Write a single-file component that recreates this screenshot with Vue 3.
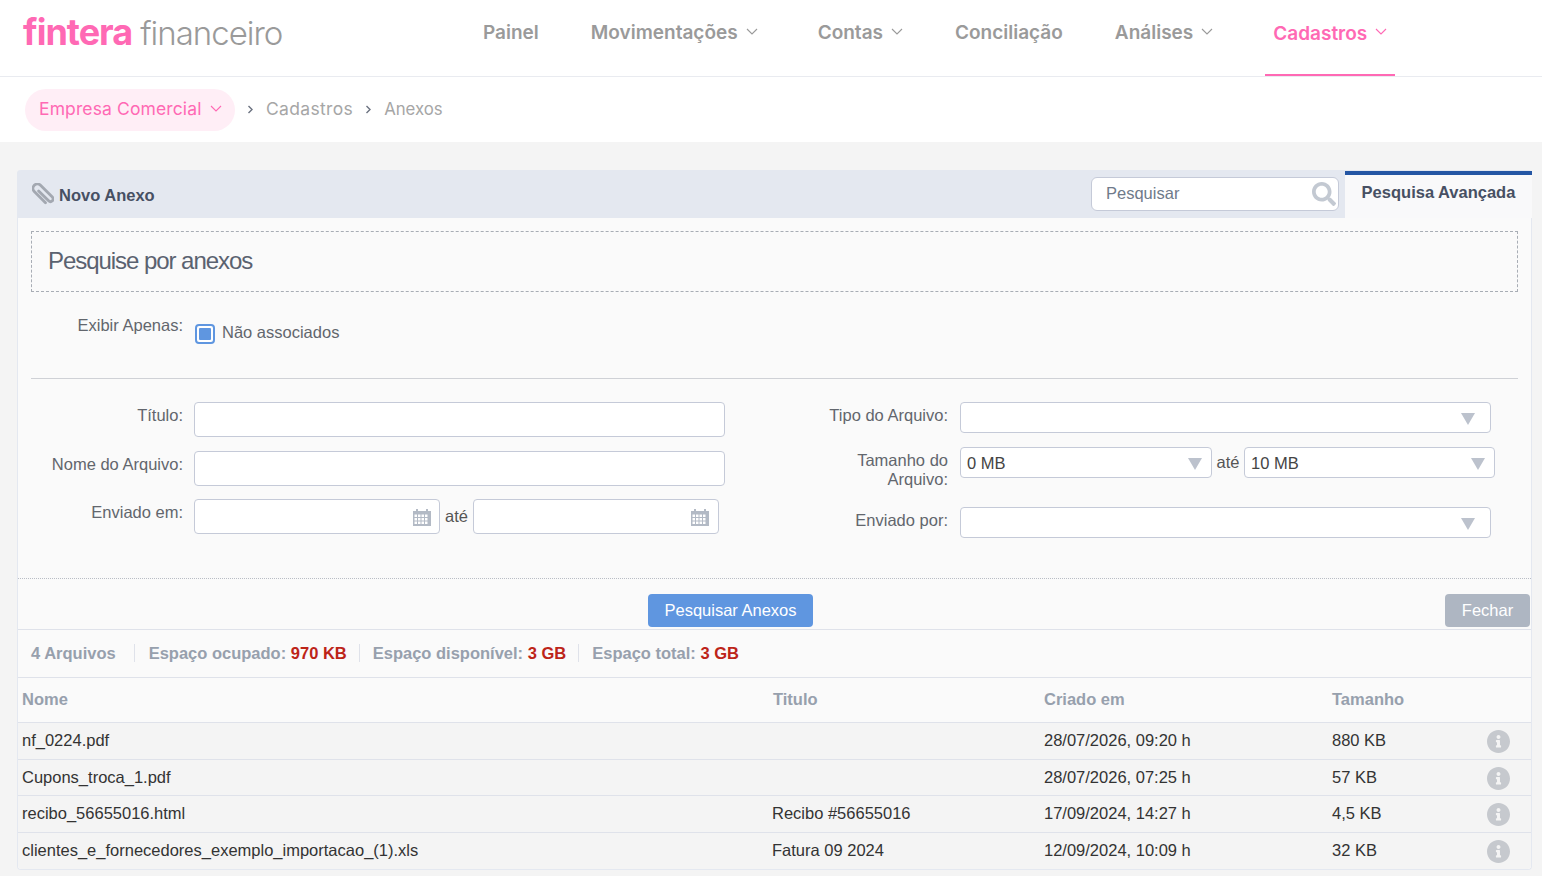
<script setup>
const navItems = [
  { label: 'Painel' },
  { label: 'Movimentações', caret: true, extra: true },
  { label: 'Contas', caret: true },
  { label: 'Conciliação' },
  { label: 'Análises', caret: true },
  { label: 'Cadastros', caret: true, active: true }
]

const rows = [
  { nome: 'nf_0224.pdf', titulo: '', criado: '28/07/2026, 09:20 h', tamanho: '880 KB' },
  { nome: 'Cupons_troca_1.pdf', titulo: '', criado: '28/07/2026, 07:25 h', tamanho: '57 KB' },
  { nome: 'recibo_56655016.html', titulo: 'Recibo #56655016', criado: '17/09/2024, 14:27 h', tamanho: '4,5 KB' },
  { nome: 'clientes_e_fornecedores_exemplo_importacao_(1).xls', titulo: 'Fatura 09 2024', criado: '12/09/2024, 10:09 h', tamanho: '32 KB' }
]

const calendarPath = 'M0 3h3V1h2v2h8V1h2v2h3v15H0zM1.500 6.500V9H4V6.500zm3.500 0V9h2.500V6.500zm3.500 0V9H11V6.500zm3.500 0V9h2.500V6.500zM1.500 10v2.500H4V10zm3.500 0v2.500h2.500V10zm3.500 0v2.500H11V10zm3.500 0v2.500h2.500V10zM1.500 13.500V16H4v-2.500zm3.500 0V16h2.500v-2.500zm3.500 0V16H11v-2.500zm3.500 0V16h2.500v-2.500z'
</script>

<template>
  <div class="page">
    <header class="topbar">
      <div class="logo"><span class="logo-brand">fintera</span><span class="logo-sub">financeiro</span></div>
      <nav class="nav">
        <a
          v-for="item in navItems"
          :key="item.label"
          class="nav-item"
          :class="{ active: item.active, extra: item.extra }"
        >
          {{ item.label }}
          <svg v-if="item.caret" class="caret" width="12" height="7" viewBox="0 0 12 7" fill="none" stroke="currentColor" stroke-width="1.100">
            <path d="M1 1l5 5 5-5" />
          </svg>
        </a>
      </nav>
    </header>

    <div class="crumbs">
      <div class="company">
        Empresa Comercial
        <svg width="12" height="7" viewBox="0 0 12 7" fill="none" stroke="currentColor" stroke-width="1.100">
          <path d="M1 1l5 5 5-5" />
        </svg>
      </div>
      <svg class="sep" width="7" height="9" viewBox="0 0 7 9" fill="none" stroke="#6b7280" stroke-width="1.400"><path d="M1.500 1l3.500 3.500-3.500 3.500" /></svg>
      <span class="crumb-wide">Cadastros</span>
      <svg class="sep" width="7" height="9" viewBox="0 0 7 9" fill="none" stroke="#6b7280" stroke-width="1.400"><path d="M1.500 1l3.500 3.500-3.500 3.500" /></svg>
      <span class="crumb-last">Anexos</span>
    </div>

    <main class="content">
      <section class="panel">
        <div class="toolbar">
          <div class="new-file">
            <svg class="clip" width="22" height="22" viewBox="-12.500 -12.500 25 25" fill="none" stroke="#a3a8b1" stroke-width="3.200" stroke-linecap="round">
              <path transform="rotate(-45)" d="M-5 9V-9a5 5 0 0 1 10 0V10a3 3 0 0 1-6 0V-6" />
            </svg>
            Novo Anexo
          </div>
          <div class="search">
            <input class="search-input" type="text" placeholder="Pesquisar" />
            <svg class="search-icon" width="24" height="24" viewBox="0 0 512 512" fill="#c3c9d2">
              <path d="M505 442.700L405.300 343c-4.500-4.500-10.600-7-17-7H372c27.600-35.300 44-79.700 44-128C416 93.100 322.900 0 208 0S0 93.100 0 208s93.100 208 208 208c48.300 0 92.700-16.400 128-44v16.300c0 6.400 2.500 12.500 7 17l99.700 99.700c9.400 9.400 24.600 9.400 33.900 0l28.300-28.300c9.400-9.400 9.400-24.600.1-34zM208 336c-70.700 0-128-57.200-128-128 0-70.700 57.200-128 128-128 70.700 0 128 57.200 128 128 0 70.700-57.200 128-128 128z" />
            </svg>
          </div>
          <div class="tab">Pesquisa Avançada</div>
        </div>

        <div class="filters">
          <h2 class="filters-title">Pesquise por anexos</h2>

          <div class="only-row">
            <label class="field-label">Exibir Apenas:</label>
            <div class="check-wrap">
              <span class="check"><span class="check-fill"></span></span>
              <span>Não associados</span>
            </div>
          </div>

          <hr class="divider" />

          <div class="form-grid">
            <div class="form-col">
              <div class="form-row">
                <label class="field-label">Título:</label>
                <input class="input wide" type="text" />
              </div>
              <div class="form-row second">
                <label class="field-label">Nome do Arquivo:</label>
                <input class="input wide" type="text" />
              </div>
              <div class="form-row">
                <label class="field-label">Enviado em:</label>
                <div class="date-range">
                  <div class="date">
                    <svg class="cal" width="18" height="18" viewBox="0 0 18 18" fill="#b3bac5">
                      <path :d="calendarPath" fill-rule="evenodd" />
                    </svg>
                  </div>
                  <span class="until">até</span>
                  <div class="date end">
                    <svg class="cal" width="18" height="18" viewBox="0 0 18 18" fill="#b3bac5">
                      <path :d="calendarPath" fill-rule="evenodd" />
                    </svg>
                  </div>
                </div>
              </div>
            </div>

            <div class="form-col right">
              <div class="form-row">
                <label class="field-label">Tipo do Arquivo:</label>
                <div class="select full"><i class="arrow"></i></div>
              </div>
              <div class="form-row size-row">
                <label class="field-label size-label">Tamanho do Arquivo:</label>
                <div class="select half">0 MB<i class="arrow"></i></div>
                <span class="until narrow">até</span>
                <div class="select half last">10 MB<i class="arrow"></i></div>
              </div>
              <div class="form-row">
                <label class="field-label">Enviado por:</label>
                <div class="select full"><i class="arrow"></i></div>
              </div>
            </div>
          </div>
        </div>

        <div class="actions">
          <button class="btn primary">Pesquisar Anexos</button>
          <button class="btn muted">Fechar</button>
        </div>

        <div class="stats">
          <span class="stat first">4 Arquivos</span>
          <span class="stat">Espaço ocupado: <b>970 KB</b></span>
          <span class="stat">Espaço disponível: <b>3 GB</b></span>
          <span class="stat last">Espaço total: <b>3 GB</b></span>
        </div>

        <div class="table">
          <div class="thead">
            <span>Nome</span>
            <span class="th-title">Titulo</span>
            <span>Criado em</span>
            <span>Tamanho</span>
          </div>
          <div v-for="row in rows" :key="row.nome" class="trow">
            <span>{{ row.nome }}</span>
            <span>{{ row.titulo }}</span>
            <span>{{ row.criado }}</span>
            <span>{{ row.tamanho }}</span>
            <svg class="info" width="23" height="23" viewBox="8 8 496 496" fill="#c6c9ce">
              <path d="M256 8C119.043 8 8 119.083 8 256c0 136.997 111.043 248 248 248s248-111.003 248-248C504 119.083 392.957 8 256 8zm0 110c23.196 0 42 18.804 42 42s-18.804 42-42 42-42-18.804-42-42 18.804-42 42-42zm56 254c0 6.627-5.373 12-12 12h-88c-6.627 0-12-5.373-12-12v-24c0-6.627 5.373-12 12-12h12v-64h-12c-6.627 0-12-5.373-12-12v-24c0-6.627 5.373-12 12-12h64c6.627 0 12 5.373 12 12v100h12c6.627 0 12 5.373 12 12v24z" />
            </svg>
          </div>
        </div>
      </section>
    </main>
  </div>
</template>

<style>
html,
body {
  margin: 0;
  background: #f4f4f4;
}
</style>

<style scoped>
.page {
  font-family: "Liberation Sans", Arial, sans-serif;
  font-size: 16.5px;
  color: #333;
  height: 876px;
  overflow: hidden;
  background: #f4f4f4;
}

.topbar {
  height: 76px;
  background: #fff;
  border-bottom: 1px solid #e9ebf0;
  display: flex;
}

.logo {
  font-family: Inter, sans-serif;
  margin-left: 23px;
  padding-top: 10px;
  font-size: 33px;
  line-height: 44px;
  white-space: nowrap;
  width: 434px;
}

.logo-brand {
  color: #ff69b4;
  font-size: 36px;
  font-weight: 700;
  letter-spacing: -1px;
}

.logo-sub {
  color: #9a9a9a;
  font-weight: 300;
  letter-spacing: -1px;
  margin-left: 8px;
}

.nav {
  display: flex;
  gap: 52px;
  margin-left: 26px;
  font-family: Inter, sans-serif;
  font-weight: 600;
  font-size: 19px;
  color: #9a9a9a;
}

.nav-item {
  display: flex;
  align-items: flex-start;
  gap: 8px;
  height: 76px;
  line-height: 66px;
  white-space: nowrap;
  box-sizing: border-box;
}

.nav-item.extra {
  margin-right: 8px;
}

.nav-item.active {
  color: #ff69b4;
  padding: 0 8px;
  line-height: 68px;
  border-bottom: 2px solid #ff69b4;
}

.caret {
  margin-top: 28px;
  flex: none;
}

.crumbs {
  height: 65px;
  background: #fff;
  display: flex;
  align-items: center;
  padding-left: 25px;
  font-family: Inter, sans-serif;
  font-size: 17.500px;
  line-height: 20px;
  color: #a6a6a6;
}

.crumbs span {
  margin-top: -2px;
}

.crumb-wide {
  letter-spacing: 0.330px;
}

.crumb-last {
  font-size: 16.800px;
}

.company {
  height: 42px;
  width: 210px;
  box-sizing: border-box;
  padding: 0 0 2px 14px;
  border-radius: 21px;
  background: #ffeef6;
  color: #ff69b4;
  display: flex;
  align-items: center;
  gap: 8px;
  white-space: nowrap;
  letter-spacing: 0.120px;
}

.sep {
  margin: 0 12px;
}

.content {
  padding: 28px 10px 0 17px;
}

.panel {
  border: 1px solid #e4e8f0;
  border-top: 0;
  border-radius: 4px;
  background: #fafafa;
}

.toolbar {
  height: 48px;
  background: #e4e8f0;
  display: flex;
  align-items: center;
  border-radius: 4px 4px 0 0;
  margin: 0 -1px;
}

.new-file {
  flex: 1;
  display: flex;
  align-items: center;
  gap: 5px;
  padding: 3px 0 0 15px;
  font-weight: 700;
  color: #475063;
}

.clip {
  margin-top: -3px;
}

.search {
  width: 248px;
  height: 34px;
  position: relative;
  margin-right: 6px;
}

.search-input {
  width: 100%;
  height: 100%;
  box-sizing: border-box;
  border: 1px solid #c5cad8;
  border-radius: 6px;
  background: #fff;
  padding: 0 14px 2px;
  font: inherit;
  outline: none;
}

.search-input::placeholder {
  color: #6f7a8a;
  opacity: 1;
}

.search-icon {
  position: absolute;
  right: 3px;
  top: 5px;
}

.tab {
  width: 187px;
  height: 47px;
  margin-top: 1px;
  box-sizing: border-box;
  border-top: 4px solid #2456a4;
  background: #f9f9fa;
  text-align: center;
  line-height: 34px;
  font-weight: 700;
  color: #475063;
  white-space: nowrap;
}

.filters {
  padding: 13px 13px 0;
  height: 361px;
  box-sizing: border-box;
  border-bottom: 1px dotted #b9bdc5;
}

.filters-title {
  margin: 0;
  height: 61px;
  box-sizing: border-box;
  border: 1px dashed #a8adb5;
  padding-left: 16px;
  font-size: 24px;
  font-weight: 400;
  line-height: 57px;
  letter-spacing: -1.050px;
  color: #5a6270;
}

.only-row {
  display: flex;
  height: 86px;
  padding-top: 22px;
  box-sizing: border-box;
}

.field-label {
  flex: none;
  width: 152px;
  margin-right: 11px;
  text-align: right;
  color: #62666d;
  line-height: 22px;
}

.check-wrap {
  display: flex;
  align-items: flex-start;
  gap: 7px;
  padding-top: 7px;
  color: #62666d;
  line-height: 22px;
}

.check {
  width: 20px;
  height: 20px;
  margin: 3px 0 0 1px;
  box-sizing: border-box;
  border: 2px solid #5f96e0;
  border-radius: 4px;
  background: #fff;
  padding: 2px;
}

.check-fill {
  display: block;
  width: 100%;
  height: 100%;
  border-radius: 1px;
  background: #5f96e0;
}

.divider {
  margin: 0;
  border: 0;
  border-top: 1px solid #cfd1d6;
}

.form-grid {
  display: grid;
  grid-template-columns: 766px 1fr;
  padding-top: 23px;
}

.form-col {
  display: flex;
  flex-direction: column;
}

.form-row {
  display: flex;
  align-items: flex-start;
  margin-bottom: 14px;
}

.form-row.second {
  margin-bottom: 13px;
}

.form-row .field-label {
  padding-top: 2px;
}

.input {
  height: 35px;
  box-sizing: border-box;
  border: 1px solid #c5cad8;
  border-radius: 4px;
  background: #fff;
  outline: none;
}

.wide {
  width: 531px;
}

.date-range {
  display: flex;
  align-items: center;
}

.date {
  width: 246px;
  height: 35px;
  box-sizing: border-box;
  border: 1px solid #c5cad8;
  border-radius: 4px;
  background: #fff;
  display: flex;
  align-items: center;
  justify-content: flex-end;
  padding-right: 8px;
}

.date.end {
  padding-right: 9px;
}

.until {
  width: 33px;
  text-align: center;
  color: #555;
  white-space: nowrap;
}

.until.narrow {
  width: 32px;
  line-height: 31px;
}

.right .field-label {
  width: 151px;
  margin-right: 12px;
}

.select {
  height: 31px;
  box-sizing: border-box;
  border: 1px solid #c5cad8;
  border-radius: 4px;
  background: #fff;
  position: relative;
  padding-left: 6px;
  line-height: 31px;
  color: #444;
}

.full {
  width: 531px;
}

.half {
  width: 252px;
}

.half.last {
  width: 251px;
}

.half .arrow {
  right: 9px;
}

.size-row {
  height: 46px;
}

.right .size-label {
  padding-top: 4px;
  line-height: 19px;
}

.arrow {
  position: absolute;
  right: 15px;
  top: 10px;
  width: 0;
  height: 0;
  border-left: 7px solid transparent;
  border-right: 7px solid transparent;
  border-top: 12px solid #bcc2cd;
}

.actions {
  height: 51px;
  border-bottom: 1px solid #dfe2ea;
  position: relative;
  display: flex;
  justify-content: center;
  padding-top: 15px;
  box-sizing: border-box;
}

.btn {
  height: 33px;
  border: 0;
  border-radius: 4px;
  color: #fff;
  font: inherit;
  padding: 0;
}

.primary {
  width: 165px;
  margin-right: 88px;
  background: #5f96e0;
}

.muted {
  position: absolute;
  right: 1px;
  top: 15px;
  width: 85px;
  background: #aeb6c2;
}

.stats {
  height: 48px;
  box-sizing: border-box;
  display: flex;
  align-items: center;
  border-bottom: 1px solid #dfe2ea;
  padding: 0 0 2px 13px;
  font-weight: 700;
  color: #97a0ad;
}

.stat {
  padding: 0 12px 0 13px;
  border-right: 1px solid #dfe2ea;
  line-height: 18px;
}

.stat.first {
  padding-left: 0;
  padding-right: 18px;
}

.stat.first + .stat {
  padding-left: 14px;
}

.stat.last {
  border-right: 0;
}

.stat b {
  color: #bd2418;
}

.thead,
.trow {
  display: grid;
  grid-template-columns: 750px 272px 288px 1fr;
  padding-left: 4px;
  align-items: center;
  position: relative;
}

.thead {
  height: 45px;
  padding-bottom: 2px;
  font-weight: 700;
  color: #97a0ad;
  border-bottom: 1px solid #dfe2ea;
  box-sizing: border-box;
}

.th-title {
  margin-left: 1px;
}

.trow {
  height: 36.500px;
  background: #f4f4f4;
  color: #333;
  border-bottom: 1px solid #dfe2ea;
  box-sizing: border-box;
}

.trow:last-child {
  border-bottom: 0;
  border-radius: 0 0 4px 4px;
}

.info {
  position: absolute;
  left: 1469px;
  top: 7px;
}
</style>
